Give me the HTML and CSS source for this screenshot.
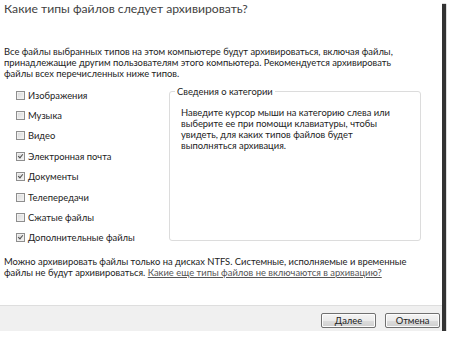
FILE: index.html
```html
<!DOCTYPE html>
<html lang="ru">
<head>
<meta charset="utf-8">
<title>Архивация</title>
<link rel="stylesheet" href="styles.css">
</head>
<body>
<div class="window">
  <div class="main">
    <h1 class="title">Какие типы файлов следует архивировать?</h1>
    <p class="intro">Все файлы выбранных типов на этом компьютере будут архивироваться, включая файлы,<br>принадлежащие другим пользователям этого компьютера. Рекомендуется архивировать<br>файлы всех перечисленных ниже типов.</p>
    <div class="content">
      <ul class="types">
        <li class="type"><span class="cb"></span><span class="label">Изображения</span></li>
        <li class="type"><span class="cb"></span><span class="label">Музыка</span></li>
        <li class="type"><span class="cb"></span><span class="label">Видео</span></li>
        <li class="type"><span class="cb checked"></span><span class="label">Электронная почта</span></li>
        <li class="type"><span class="cb checked"></span><span class="label">Документы</span></li>
        <li class="type"><span class="cb"></span><span class="label">Телепередачи</span></li>
        <li class="type"><span class="cb"></span><span class="label">Сжатые файлы</span></li>
        <li class="type"><span class="cb checked"></span><span class="label">Дополнительные файлы</span></li>
      </ul>
      <fieldset class="details">
        <legend class="legend">Сведения о категории</legend>
        <p class="details-text">Наведите курсор мыши на категорию слева или<br>выберите ее при помощи клавиатуры, чтобы<br>увидеть, для каких типов файлов будет<br>выполняться архивация.</p>
      </fieldset>
    </div>
    <p class="note">Можно архивировать файлы только на дисках NTFS. Системные, исполняемые и временные<br>файлы не будут архивироваться. <a class="link" href="#">Какие еще типы файлов не включаются в архивацию?</a></p>
  </div>
  <div class="footer">
    <button class="btn">Далее</button>
    <button class="btn">Отмена</button>
  </div>
</div>
</body>
</html>
```

FILE: styles.css
```css
html, body {
  margin: 0;
  padding: 0;
  background: #ffffff;
}
body {
  font-family: Lato, "Liberation Sans", sans-serif;
  font-size: 9.4px;
  color: #222222;
}
.window {
  width: 442px;
  height: 331px;
  background: #ffffff;
  display: flex;
  flex-direction: column;
  box-shadow: 4px 4px 1px rgba(0, 0, 0, 0.8);
}
.main {
  height: 305px;
  padding: 0 0 0 4px;
  box-sizing: border-box;
}
.title {
  margin: 0;
  padding-top: 2px;
  font-size: 12.2px;
  line-height: 14px;
  font-weight: normal;
  color: #3f3f3f;
}
.intro {
  margin: 30px 0 0 0;
  line-height: 11px;
}
.content {
  display: flex;
  margin-top: 6px;
  height: 164px;
}
.types {
  list-style: none;
  margin: 0;
  padding: 0 0 0 12px;
  width: 153px;
}
.type {
  height: 20.4px;
  display: flex;
  align-items: center;
  gap: 3px;
}
.cb {
  width: 7px;
  height: 7px;
  border: 1px solid #8e8e8e;
  background: linear-gradient(135deg, #d8d8d8, #f4f4f4);
  box-shadow: inset 0 0 0 1px #f0f0f0;
  position: relative;
  flex: none;
}
.cb.checked::after {
  content: "";
  position: absolute;
  left: 2px;
  top: 0px;
  width: 2px;
  height: 4px;
  border-right: 1.5px solid #505050;
  border-bottom: 1.5px solid #505050;
  transform: rotate(40deg);
}
.details {
  margin: 1px 0 0 0;
  padding: 10px 0 0 0;
  width: 252px;
  height: 155px;
  border: 1px solid #dcdcdc;
  border-radius: 3px;
  box-sizing: border-box;
}
.legend {
  padding: 0 2px;
  margin-left: 5px;
  line-height: 11px;
}
.details-text {
  margin: 0;
  padding-left: 11px;
  line-height: 11px;
}
.note {
  margin: 7px 0 0 0;
  line-height: 11px;
}
.link {
  color: #555555;
  text-decoration: underline;
}
.footer {
  height: 26px;
  background: #f0f0f0;
  border-top: 1px solid #dedede;
  box-sizing: border-box;
  display: flex;
  justify-content: flex-end;
  align-items: flex-start;
  gap: 9px;
  padding: 7px 2px 0 0;
}
.btn {
  width: 55px;
  height: 15px;
  padding: 0;
  font-family: inherit;
  font-size: 9.4px;
  color: #222222;
  border: 1px solid #707070;
  border-radius: 2px;
  background: linear-gradient(#f4f4f4 0%, #ebebeb 50%, #dddddd 51%, #cfcfcf 100%);
  box-shadow: inset 0 0 0 1px #fcfcfc;
}
```
